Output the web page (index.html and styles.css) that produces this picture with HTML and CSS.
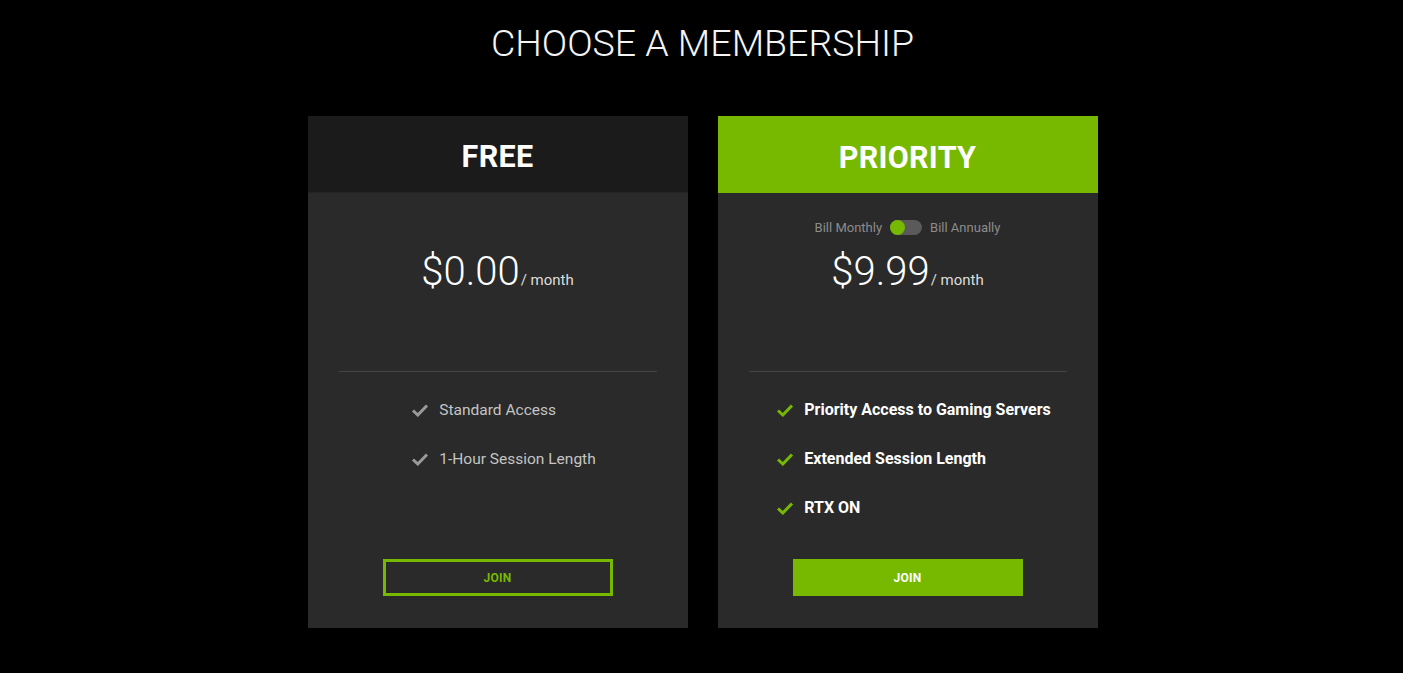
FILE: index.html
```html
<!DOCTYPE html>
<html lang="en">
<head>
<meta charset="utf-8">
<title>Choose a Membership</title>
<link rel="stylesheet" href="styles.css">
</head>
<body>
<main class="page">
  <h1 class="title">CHOOSE A MEMBERSHIP</h1>
  <div class="plans">
    <section class="card">
      <header class="card-head head-free"><h2>FREE</h2></header>
      <div class="card-body">
        <div class="top">
          <div class="billing billing-empty"></div>
          <div class="price"><span class="amount">$0.00</span><span class="per">/ month</span></div>
        </div>
        <div class="sep"></div>
        <div class="features">
          <ul class="list list-free">
            <li><svg class="check" viewBox="0 0 18 14"><path d="M2 7.5 L6.8 12 L16 2.5"/></svg>Standard Access</li>
            <li><svg class="check" viewBox="0 0 18 14"><path d="M2 7.5 L6.8 12 L16 2.5"/></svg>1-Hour Session Length</li>
          </ul>
        </div>
        <div class="btn-row"><a class="btn btn-outline">JOIN</a></div>
      </div>
    </section>
    <section class="card">
      <header class="card-head head-priority"><h2>PRIORITY</h2></header>
      <div class="card-body">
        <div class="top">
          <div class="billing">
            <span>Bill Monthly</span>
            <span class="toggle"><span class="knob"></span></span>
            <span>Bill Annually</span>
          </div>
          <div class="price"><span class="amount">$9.99</span><span class="per">/ month</span></div>
        </div>
        <div class="sep"></div>
        <div class="features">
          <ul class="list list-priority">
            <li><svg class="check" viewBox="0 0 18 14"><path d="M2 7.5 L6.8 12 L16 2.5"/></svg>Priority Access to Gaming Servers</li>
            <li><svg class="check" viewBox="0 0 18 14"><path d="M2 7.5 L6.8 12 L16 2.5"/></svg>Extended Session Length</li>
            <li><svg class="check" viewBox="0 0 18 14"><path d="M2 7.5 L6.8 12 L16 2.5"/></svg>RTX ON</li>
          </ul>
        </div>
        <div class="btn-row"><a class="btn btn-fill">JOIN</a></div>
      </div>
    </section>
  </div>
</main>
</body>
</html>
```
FILE: styles.css
```css
* { box-sizing: border-box; }
html, body { margin: 0; padding: 0; background: #000; }
body { font-family: Roboto, "Noto Sans", sans-serif; color: #fff; }
.page { display: flex; flex-direction: column; align-items: center; padding-left: 2px; }
.title {
  margin: 22px 0 0;
  height: 42px;
  line-height: 42px;
  font-size: 37.5px;
  font-weight: 300;
  letter-spacing: 0;
  color: #f4f4f4;
}
.plans { display: flex; gap: 30px; margin-top: 52px; }
.card { width: 380px; height: 512px; background: #2a2a2a; display: flex; flex-direction: column; }
.card-head { height: 77px; display: flex; align-items: center; justify-content: center; padding-top: 5px; }
.card-head h2 { margin: 0; font-size: 30.5px; font-weight: 700; letter-spacing: 0.3px; color: #fff; }
.head-free { background: #1b1b1b; border-bottom: 1px solid #242424; }
.head-priority { background: #76b900; }
.card-body { flex: 1; display: flex; flex-direction: column; padding: 0 31px; }
.top { height: 178px; padding-top: 24px; display: flex; flex-direction: column; align-items: center; }
.billing { height: 20px; display: flex; align-items: center; gap: 8px; font-size: 13px; color: #8c8c8c; }
.toggle { width: 32px; height: 15px; border-radius: 8px; background: #5a5a5a; position: relative; display: inline-block; }
.knob { position: absolute; left: 0; top: 0; width: 15px; height: 15px; border-radius: 50%; background: #76b900; }
.price { margin-top: 11px; display: flex; align-items: baseline; }
.amount { font-size: 40px; font-weight: 300; line-height: 48px; color: #fff; }
.per { font-size: 15px; color: #ddd; margin-left: 1px; }
.sep { height: 1px; background: #454545; }
.features { height: 187px; display: flex; justify-content: center; padding-top: 13px; padding-left: 12px; }
.list { list-style: none; margin: 0; padding: 0; }
.list li { height: 49px; display: flex; align-items: center; font-size: 15.5px; }
.check { width: 18px; height: 14px; margin-right: 10px; fill: none; stroke-width: 3; stroke-linecap: butt; stroke-linejoin: miter; }
.list-free li { color: #c4c4c4; }
.list-free .check { stroke: #9a9a9a; }
.list-priority li { color: #fff; font-weight: 700; font-size: 16px; }
.list-priority .check { stroke: #76b900; }
.btn-row { display: flex; justify-content: center; }
.btn { width: 230px; height: 37px; display: flex; align-items: center; justify-content: center; font-size: 12px; font-weight: 700; letter-spacing: 0.3px; }
.btn-outline { border: 3px solid #76b900; color: #76b900; }
.btn-fill { background: #76b900; color: #fff; }
```
